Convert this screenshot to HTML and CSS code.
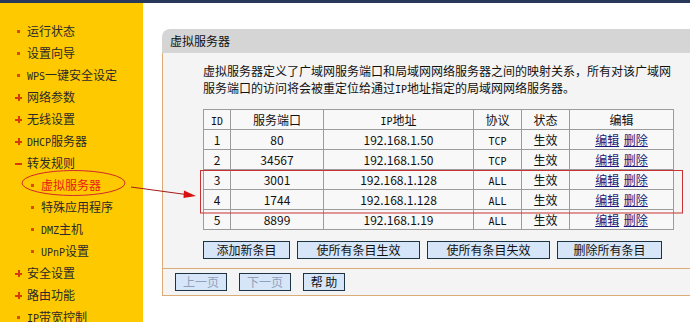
FILE: index.html
```html
<!DOCTYPE html>
<html lang="zh-CN">
<head>
<meta charset="utf-8">
<title>虚拟服务器</title>
<link rel="stylesheet" href="styles.css">
</head>
<body>
<div class="topbar"></div>
<div class="layout">
  <nav class="sidebar">
    <ul class="menu">
      <li><span class="bullet dot"></span>运行状态</li>
      <li><span class="bullet dot"></span>设置向导</li>
      <li><span class="bullet dot"></span><span class="en">WPS</span>一键安全设定</li>
      <li><span class="bullet plus"></span>网络参数</li>
      <li><span class="bullet plus"></span>无线设置</li>
      <li><span class="bullet plus"></span><span class="en">DHCP</span>服务器</li>
      <li><span class="bullet minus"></span>转发规则</li>
      <li class="sub active"><span class="bullet dot"></span>虚拟服务器</li>
      <li class="sub"><span class="bullet dot"></span>特殊应用程序</li>
      <li class="sub"><span class="bullet dot"></span><span class="en">DMZ</span>主机</li>
      <li class="sub"><span class="bullet dot"></span><span class="en">UPnP</span>设置</li>
      <li><span class="bullet plus"></span>安全设置</li>
      <li><span class="bullet plus"></span>路由功能</li>
      <li class="last"><span class="bullet dot"></span><span class="en">IP</span>带宽控制</li>
    </ul>
  </nav>
  <main class="main">
    <section class="panel">
      <div class="panel-head">虚拟服务器</div>
      <div class="panel-body">
        <p class="desc">虚拟服务器定义了广域网服务端口和局域网网络服务器之间的映射关系，所有对该广域网服务端口的访问将会被重定位给通过<span class="en">IP</span>地址指定的局域网网络服务器。</p>
        <table class="grid">
          <colgroup>
            <col class="c-id"><col class="c-port"><col class="c-ip"><col class="c-proto"><col class="c-state"><col class="c-edit">
          </colgroup>
          <thead>
            <tr><th><span class="en">ID</span></th><th>服务端口</th><th><span class="en">IP</span>地址</th><th>协议</th><th>状态</th><th>编辑</th></tr>
          </thead>
          <tbody>
            <tr><td>1</td><td>80</td><td>192.168.1.50</td><td><span class="en">TCP</span></td><td>生效</td><td><a href="#">编辑</a> <a href="#">删除</a></td></tr>
            <tr><td>2</td><td>34567</td><td>192.168.1.50</td><td><span class="en">TCP</span></td><td>生效</td><td><a href="#">编辑</a> <a href="#">删除</a></td></tr>
            <tr><td>3</td><td>3001</td><td>192.168.1.128</td><td><span class="en">ALL</span></td><td>生效</td><td><a href="#">编辑</a> <a href="#">删除</a></td></tr>
            <tr><td>4</td><td>1744</td><td>192.168.1.128</td><td><span class="en">ALL</span></td><td>生效</td><td><a href="#">编辑</a> <a href="#">删除</a></td></tr>
            <tr><td>5</td><td>8899</td><td>192.168.1.19</td><td><span class="en">ALL</span></td><td>生效</td><td><a href="#">编辑</a> <a href="#">删除</a></td></tr>
          </tbody>
        </table>
        <div class="actions">
          <button class="btn w87">添加新条目</button>
          <button class="btn w123">使所有条目生效</button>
          <button class="btn w123">使所有条目失效</button>
          <button class="btn w105">删除所有条目</button>
        </div>
      </div>
      <div class="panel-foot">
        <button class="btn small disabled">上一页</button>
        <button class="btn small disabled">下一页</button>
        <button class="btn small help">帮 助</button>
      </div>
    </section>
  </main>
</div>
<svg class="annot" width="690" height="322" viewBox="0 0 690 322">
  <ellipse cx="73.5" cy="183" rx="51.5" ry="12.5" fill="none" stroke="#d02a2a" stroke-width="1"/>
  <line x1="131" y1="187" x2="186" y2="194.5" stroke="#a81818" stroke-width="1"/>
  <polygon points="196,196 184,190.5 183.5,198" fill="#d81010"/>
  <rect x="200.5" y="170.5" width="482" height="42.5" fill="none" stroke="#c83232" stroke-width="1"/>
</svg>
</body>
</html>
```
FILE: styles.css
```css
* { box-sizing: border-box; }
html, body { margin: 0; padding: 0; }
body {
  width: 690px;
  height: 322px;
  overflow: hidden;
  position: relative;
  background: #ffffff;
  font-family: "Noto Sans CJK SC", "Noto Sans", sans-serif;
  font-size: 12px;
  color: #111;
}
.en {
  font-family: "DejaVu Sans Mono", "Liberation Mono", monospace;
  font-size: 10px;
  line-height: 0;
}
.desc .en { line-height: 12px; }
.topbar { height: 3px; background: #28385a; }
.layout { display: flex; height: 319px; }
.sidebar {
  width: 143px;
  flex: none;
  background: #ffc900;
  padding-top: 17px;
}
.menu { list-style: none; margin: 0; padding: 0; }
.menu li {
  display: block;
  height: 22px;
  line-height: 22px;
  padding-left: 15px;
  color: #2a2a2a;
  white-space: nowrap;
  overflow: hidden;
}
.menu li.last { height: 16px; }
.menu li.sub { padding-left: 29px; }
.menu li.active { color: #e81818; }
.bullet {
  display: inline-block;
  vertical-align: middle;
  width: 7px;
  height: 7px;
  margin: -2px 5px 0 0;
  position: relative;
}
.bullet.dot::before {
  content: "";
  position: absolute;
  left: 2px; top: 2px;
  width: 3px; height: 3px;
  background: #d84a10;
}
.bullet.plus::before, .bullet.plus::after, .bullet.minus::before {
  content: "";
  position: absolute;
  background: #d83a10;
}
.bullet.plus::before, .bullet.minus::before { left: 0; top: 3px; width: 7px; height: 2px; }
.bullet.plus::after { left: 2.5px; top: 0; width: 2px; height: 7px; }

.main { flex: 1; padding: 26px 0 0 19px; min-width: 0; }
.panel { width: 560px; }
.panel-head {
  height: 24px;
  line-height: 24px;
  background: #d5d5d5;
  border-top-left-radius: 8px;
  padding-left: 8px;
  color: #111;
}
.panel-body {
  background: #f4f4f4;
  border-left: 1px solid #dcac78;
  padding: 9px 0 9px 40px;
}
.desc {
  margin: 0;
  width: 472px;
  height: 34px;
  line-height: 17px;
  color: #111;
}
.grid {
  margin-top: 13px;
  width: 470px;
  border-collapse: collapse;
  table-layout: fixed;
  border: 1px solid #8a8a8a;
  background: #f8f8f8;
}
.grid col.c-id { width: 27px; }
.grid col.c-port { width: 93px; }
.grid col.c-ip { width: 150px; }
.grid col.c-proto { width: 48px; }
.grid col.c-state { width: 48px; }
.grid col.c-edit { width: 104px; }
.grid th, .grid td {
  height: 20px;
  padding: 0;
  border: 1px solid #9c9c9c;
  text-align: center;
  vertical-align: middle;
  font-weight: normal;
  line-height: 18px;
  color: #111;
  overflow: hidden;
}
.grid a { color: #1a1a7a; text-decoration: underline; margin: 0 1px; }
.actions { display: flex; gap: 7px; margin-top: 11px; }
.btn {
  height: 18px;
  padding: 0;
  border: 1px solid #1c3444;
  background: #d6e5f8;
  font-family: inherit;
  font-size: 12px;
  line-height: 16px;
  color: #111;
  border-radius: 0;
}
.w87 { width: 87px; }
.w123 { width: 123px; }
.w105 { width: 105px; }
.panel-foot {
  height: 28px;
  background: #f4f4f4;
  border-top: 1px solid #dcac78;
  border-bottom: 1px solid #dcac78;
  border-left: 1px solid #dcac78;
  padding: 4px 0 0 12px;
  display: flex;
  gap: 12px;
  align-items: flex-start;
}
.btn.small { width: 52px; height: 18px; }
.btn.help { width: 42px; }
.btn.disabled { color: #8fa0b8; }
.annot { position: absolute; left: 0; top: 0; pointer-events: none; }
```
